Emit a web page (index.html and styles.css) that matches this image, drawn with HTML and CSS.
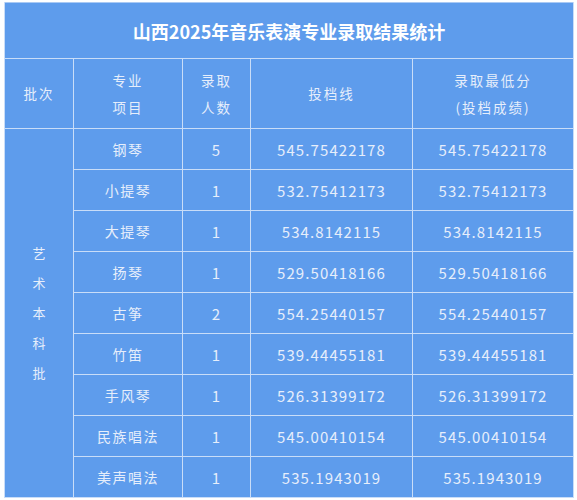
FILE: index.html
```html
<!DOCTYPE html>
<html lang="zh">
<head>
<meta charset="utf-8">
<link rel="stylesheet" href="styles.css">
</head>
<body>
<div class="wrap">
<table class="grid">
<colgroup>
<col class="c1"><col class="c2"><col class="c3"><col class="c4"><col class="c5">
</colgroup>
<thead>
<tr class="title-row"><th colspan="5" class="title">山西2025年音乐表演专业录取结果统计</th></tr>
<tr class="head-row">
<th>批次</th>
<th>专业<br>项目</th>
<th>录取<br>人数</th>
<th>投档线</th>
<th>录取最低分<br>(投档成绩)</th>
</tr>
</thead>
<tbody>
<tr><td rowspan="9" class="batch">艺<br>术<br>本<br>科<br>批</td><td class="cn">钢琴</td><td class="num">5</td><td class="num">545.75422178</td><td class="num">545.75422178</td></tr>
<tr><td class="cn">小提琴</td><td class="num">1</td><td class="num">532.75412173</td><td class="num">532.75412173</td></tr>
<tr><td class="cn">大提琴</td><td class="num">1</td><td class="num">534.8142115</td><td class="num">534.8142115</td></tr>
<tr><td class="cn">扬琴</td><td class="num">1</td><td class="num">529.50418166</td><td class="num">529.50418166</td></tr>
<tr><td class="cn">古筝</td><td class="num">2</td><td class="num">554.25440157</td><td class="num">554.25440157</td></tr>
<tr><td class="cn">竹笛</td><td class="num">1</td><td class="num">539.44455181</td><td class="num">539.44455181</td></tr>
<tr><td class="cn">手风琴</td><td class="num">1</td><td class="num">526.31399172</td><td class="num">526.31399172</td></tr>
<tr><td class="cn">民族唱法</td><td class="num">1</td><td class="num">545.00410154</td><td class="num">545.00410154</td></tr>
<tr><td class="cn">美声唱法</td><td class="num">1</td><td class="num">535.1943019</td><td class="num">535.1943019</td></tr>
</tbody>
</table>
</div>
</body>
</html>
```
FILE: styles.css
```css
html, body {
  margin: 0;
  padding: 0;
  background: #ffffff;
}
.wrap {
  padding: 2px 4px 0 4px;
}
.grid {
  width: 569px;
  table-layout: fixed;
  border-collapse: collapse;
  background: #5e9cec;
  color: #e6eefb;
  font-family: "Noto Sans CJK SC", "Noto Sans", sans-serif;
  border: 1px solid #a9c9f4;
}
.c1 { width: 69px; }
.c2 { width: 109px; }
.c3 { width: 68px; }
.c4 { width: 162px; }
.c5 { width: 161px; }
.grid th, .grid td {
  border: 1.5px solid #c9ddf8;
  text-align: center;
  vertical-align: middle;
  padding: 0;
  font-weight: normal;
}
.title-row { height: 56px; }
.grid th.title {
  font-size: 18px;
  font-weight: bold;
  color: #ffffff;
  letter-spacing: 0;
  border-top: none;
}
.head-row { height: 70px; }
.head-row th {
  font-size: 13.5px;
  line-height: 27px;
  letter-spacing: 2px;
}
tbody tr { height: 41px; }
.batch {
  font-size: 13px;
  line-height: 30px;
}
.cn {
  font-size: 14px;
  letter-spacing: 1.5px;
}
.num {
  font-size: 15px;
  letter-spacing: 1.1px;
}
```
